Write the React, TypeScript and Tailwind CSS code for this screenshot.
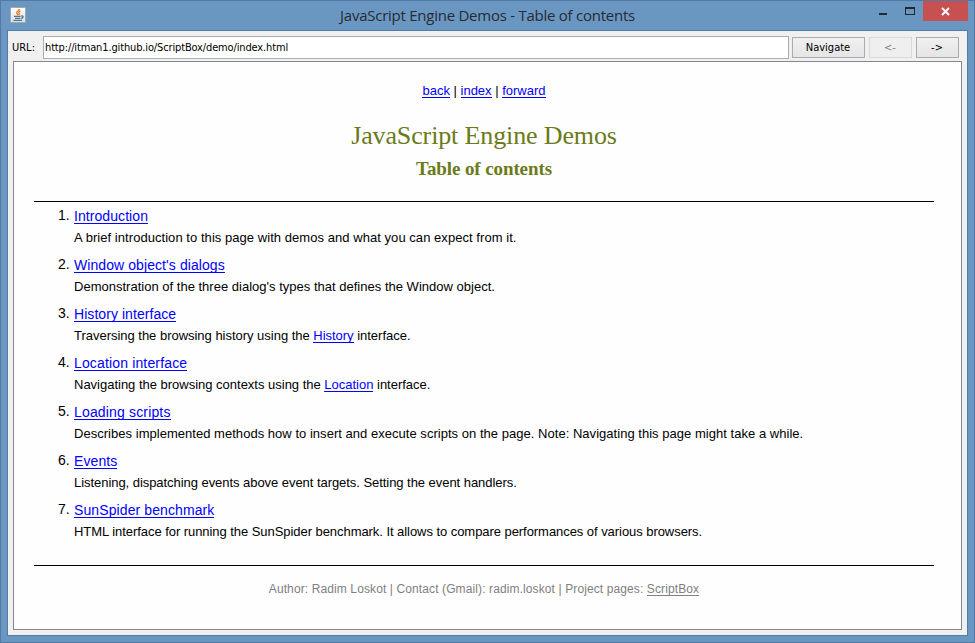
import type { ReactNode } from "react";

type LinkProps = { children: ReactNode; className?: string };

function Link({ children, className = "h-[14px] border-[#0000ff] text-[#0000ff]" }: LinkProps) {
  return (
    <a className={`inline-block border-b ${className}`}>
      {children}
    </a>
  );
}

const inline = "h-[14px] leading-[14px] border-[#0000ff] text-[#0000ff]";

const items: { title: string; titleClass: string; text: ReactNode; textClass: string }[] = [
  { title: "Introduction", titleClass: "tracking-[0.07px]", text: "A brief introduction to this page with demos and what you can expect from it.", textClass: "tracking-[0.05px]" },
  { title: "Window object's dialogs", titleClass: "tracking-[0.08px]", text: "Demonstration of the three dialog's types that defines the Window object.", textClass: "tracking-[0.01px]" },
  { title: "History interface", titleClass: "tracking-[0.06px]", text: <>Traversing the browsing history using the <Link className={inline}>History</Link> interface.</>, textClass: "tracking-[-0.02px]" },
  { title: "Location interface", titleClass: "tracking-[0.15px]", text: <>Navigating the browsing contexts using the <Link className={inline}>Location</Link> interface.</>, textClass: "tracking-[-0.01px]" },
  { title: "Loading scripts", titleClass: "tracking-[0.16px]", text: "Describes implemented methods how to insert and execute scripts on the page. Note: Navigating this page might take a while.", textClass: "tracking-[0.03px]" },
  { title: "Events", titleClass: "tracking-[0.1px]", text: "Listening, dispatching events above event targets. Setting the event handlers.", textClass: "tracking-[-0.05px]" },
  { title: "SunSpider benchmark", titleClass: "tracking-[0.1px]", text: "HTML interface for running the SunSpider benchmark. It allows to compare performances of various browsers.", textClass: "tracking-[-0.055px]" },
];

function JavaIcon() {
  return (
    <svg width="16" height="16" viewBox="0 0 16 16" className="block">
      <defs>
        <linearGradient id="tile" x1="0" y1="0" x2="0" y2="1">
          <stop offset="0" stopColor="#ffffff" />
          <stop offset="1" stopColor="#dcdcdc" />
        </linearGradient>
      </defs>
      <rect x="0.5" y="0.5" width="15" height="15" rx="1" fill="url(#tile)" stroke="#a3a8ac" />
      <path d="M9.300 2c.3 1.600-3 2.200-2.500 4 .2.900 1.200 1.200.9 2.200M10.500 4c-2 .9-2 1.600-1.300 2.600.3.600 0 1-.5 1.400" fill="none" stroke="#e5761c" strokeWidth="1.300" />
      <path d="M4 9.400h6.500M5 11.300h5.500M3.500 13.400h8.500M11 9.100c2.900-.7 2.600 1.800.3 2.400" fill="none" stroke="#4d7898" strokeWidth="1.300" />
    </svg>
  );
}

function TitleBar() {
  return (
    <header className="flex h-[29px] items-start">
      <div className="ml-[3px] mt-[6px] w-[36px]"><JavaIcon /></div>
      <h1 className="flex-1 pl-[51px] pt-[4px] text-center font-['Open_Sans','Noto_Sans',sans-serif] text-[15px] leading-[20px] text-[#262b31]">
        <span className="inline-block whitespace-nowrap tracking-[-0.25px]">JavaScript Engine Demos - Table of contents</span>
      </h1>
      <svg width="96" height="20" viewBox="0 0 96 20" className="mr-[-6px] block" shapeRendering="crispEdges">
        <rect x="1" y="12" width="8" height="2" fill="#24282c" />
        <path d="M27 6h10v8H27zM28 8v5h8V8z" fill="#24282c" fillRule="evenodd" />
        <rect x="45" width="45" height="20" fill="#c75050" />
        <path d="M64 7l7 7M71 7l-7 7" stroke="#fff" strokeWidth="1.900" shapeRendering="auto" />
      </svg>
    </header>
  );
}

const button = "h-[21px] border bg-gradient-to-b pr-[1px] text-center leading-[18px]";

export default function App() {
  return (
    <div className="flex h-[643px] w-[975px] flex-col overflow-hidden border border-[#507aa3] bg-[#6a97c2] px-[6px] pb-[6px]">
      <TitleBar />
      <main className="flex min-h-0 flex-1 flex-col border border-[#537ca5] bg-[#f0f0f0] px-[5px] pb-[5px] pt-[5px]">
        <div className="flex h-[25px] shrink-0 items-start font-['DejaVu_Sans_Condensed','Open_Sans',sans-serif] text-[11px] text-black">
          <label className="-ml-[1px] w-[31px] whitespace-nowrap pt-[2px] leading-[20px]">URL:</label>
          <div className="h-[23px] w-[746px] border border-[#abadb3] bg-white pl-[1px] leading-[21px]">
            <span className="inline-block whitespace-nowrap tracking-[-0.14px]">http://itman1.github.io/ScriptBox/demo/index.html</span>
          </div>
          <button className={`${button} ml-[3px] mt-[1px] w-[73px] border-[#acacac] from-[#f0f0f0] to-[#e5e5e5]`}>Navigate</button>
          <button className={`${button} ml-[4px] mt-[1px] w-[43px] border-[#d9d9d9] from-[#efefef] to-[#efefef] text-[#838383]`}>&lt;-</button>
          <button className={`${button} ml-[4px] mt-[1px] w-[43px] border-[#acacac] from-[#f0f0f0] to-[#e5e5e5]`}>-&gt;</button>
        </div>
        <section className="min-h-0 flex-1 border border-[#828790] bg-[#fefefe] pl-[20px] pr-[27px] font-['Liberation_Sans',Arial,sans-serif] text-[13px] text-black">
          <nav className="flex justify-center pt-[22px] leading-[14px]">
            <div className="flex h-[15px] whitespace-pre">
              <Link>back</Link> | <Link>index</Link> | <Link>forward</Link>
            </div>
          </nav>
          <div className="h-[103px] border-b border-black text-center font-['Liberation_Serif',serif] text-[#6b7a1a]">
            <h2 className="pt-[21px] text-[26px] leading-[32px] tracking-[-0.13px]">JavaScript Engine Demos</h2>
            <h3 className="pt-[6px] text-[19px] font-bold leading-[22px] tracking-[-0.1px]">Table of contents</h3>
          </div>
          <ol className="flex h-[363px] flex-col pl-[24px] pt-[5px]">
            {items.map((item, i) => (
              <li key={item.title} className="flex h-[49px] shrink-0">
                <span className="w-[16px] text-[14px] leading-[16px]">{i + 1}.</span>
                <div className="whitespace-nowrap">
                  <div className="h-[22px] text-[14px] leading-[17px]">
                    <Link className={`h-[17px] border-[#0000ff] text-[#0000ff] leading-[19px] ${item.titleClass}`}>{item.title}</Link>
                  </div>
                  <p className={`leading-[18px] ${item.textClass}`}>{item.text}</p>
                </div>
              </li>
            ))}
          </ol>
          <footer className="border-t border-black pt-[16px] text-center text-[12px] leading-[14px] text-[#808080]">
            <span className="inline-block whitespace-nowrap tracking-[0.11px]">
              Author: Radim Loskot | Contact (Gmail): radim.loskot | Project pages: <Link className="h-[14px] border-[#808080]">ScriptBox</Link>
            </span>
          </footer>
        </section>
      </main>
    </div>
  );
}
